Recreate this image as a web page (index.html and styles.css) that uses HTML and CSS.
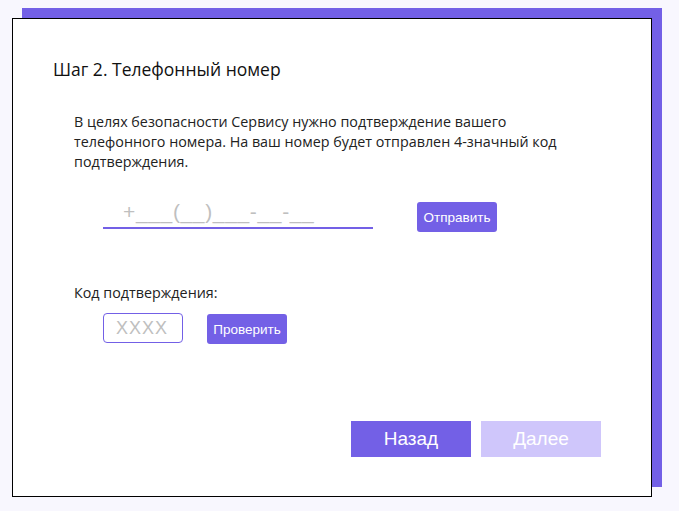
FILE: index.html
```html
<!DOCTYPE html>
<html lang="ru">
<head>
<meta charset="utf-8">
<link rel="stylesheet" href="styles.css">
</head>
<body>
<div class="card">
  <h2 class="title">Шаг 2. Телефонный номер</h2>
  <p class="desc">В целях безопасности Сервису нужно подтверждение вашего телефонного номера. На ваш номер будет отправлен 4-значный код подтверждения.</p>
  <div class="phone-row">
    <input class="phone" type="text" placeholder="+___(__)___-__-__">
    <button class="btn-small">Отправить</button>
  </div>
  <div class="code-label">Код подтверждения:</div>
  <div class="code-row">
    <input class="code" type="text" placeholder="XXXX">
    <button class="btn-small">Проверить</button>
  </div>
  <div class="nav">
    <button class="btn-nav">Назад</button>
    <button class="btn-nav disabled">Далее</button>
  </div>
</div>
</body>
</html>
```
FILE: styles.css
```css
html, body {
  margin: 0;
  padding: 0;
  background: #f8f7fe;
}
body {
  padding: 18px 0 0 12px;
  font-family: "Open Sans", sans-serif;
  color: #222;
}
.card {
  box-sizing: border-box;
  width: 640px;
  height: 479px;
  background: #fff;
  border: 1px solid #000;
  box-shadow: 10px -10px 0 #7360e6;
  padding: 38px 50px 0 40px;
  display: flex;
  flex-direction: column;
}
.title {
  margin: 0;
  font-size: 17.5px;
  font-weight: 400;
  line-height: 25px;
  color: #111;
}
.desc {
  margin: 30px 0 0 21px;
  font-size: 14.33px;
  line-height: 20px;
  width: 500px;
}
.phone-row {
  display: flex;
  align-items: flex-end;
  margin: 27px 0 0 50px;
}
.phone {
  box-sizing: border-box;
  width: 270px;
  height: 30px;
  border: none;
  border-bottom: 2px solid #7360e6;
  padding: 0 0 3px 20px;
  font-family: "Liberation Sans", Arial, sans-serif;
  font-size: 21px;
  letter-spacing: 0.65px;
  outline: none;
}
.phone::placeholder, .code::placeholder {
  color: #bfbfbf;
}
.btn-small {
  box-sizing: border-box;
  width: 80px;
  height: 30px;
  border: none;
  border-radius: 3px;
  background: #7360e6;
  color: #fff;
  font-family: "Liberation Sans", Arial, sans-serif;
  font-size: 13.5px;
  padding: 0;
}
.phone-row .btn-small {
  margin: 0 0 -3px 44px;
}
.code-label {
  margin: 54px 0 0 21px;
  font-size: 14.33px;
  line-height: 20px;
}
.code-row {
  display: flex;
  align-items: center;
  margin: 9px 0 0 50px;
}
.code {
  box-sizing: border-box;
  width: 80px;
  height: 30px;
  border: 1px solid #7360e6;
  border-radius: 4px;
  padding: 0 0 0 12px;
  font-family: "Liberation Sans", Arial, sans-serif;
  font-size: 18px;
  letter-spacing: 1px;
  outline: none;
}
.code-row .btn-small {
  margin: 2px 0 0 24px;
}
.nav {
  margin-top: auto;
  margin-bottom: 39px;
  display: flex;
  justify-content: flex-end;
  gap: 10px;
}
.btn-nav {
  width: 120px;
  height: 36px;
  border: none;
  background: #7360e6;
  color: #fff;
  font-family: "Liberation Sans", Arial, sans-serif;
  font-size: 19px;
  padding: 0;
}
.btn-nav.disabled {
  background: #cfc6fb;
}
```
